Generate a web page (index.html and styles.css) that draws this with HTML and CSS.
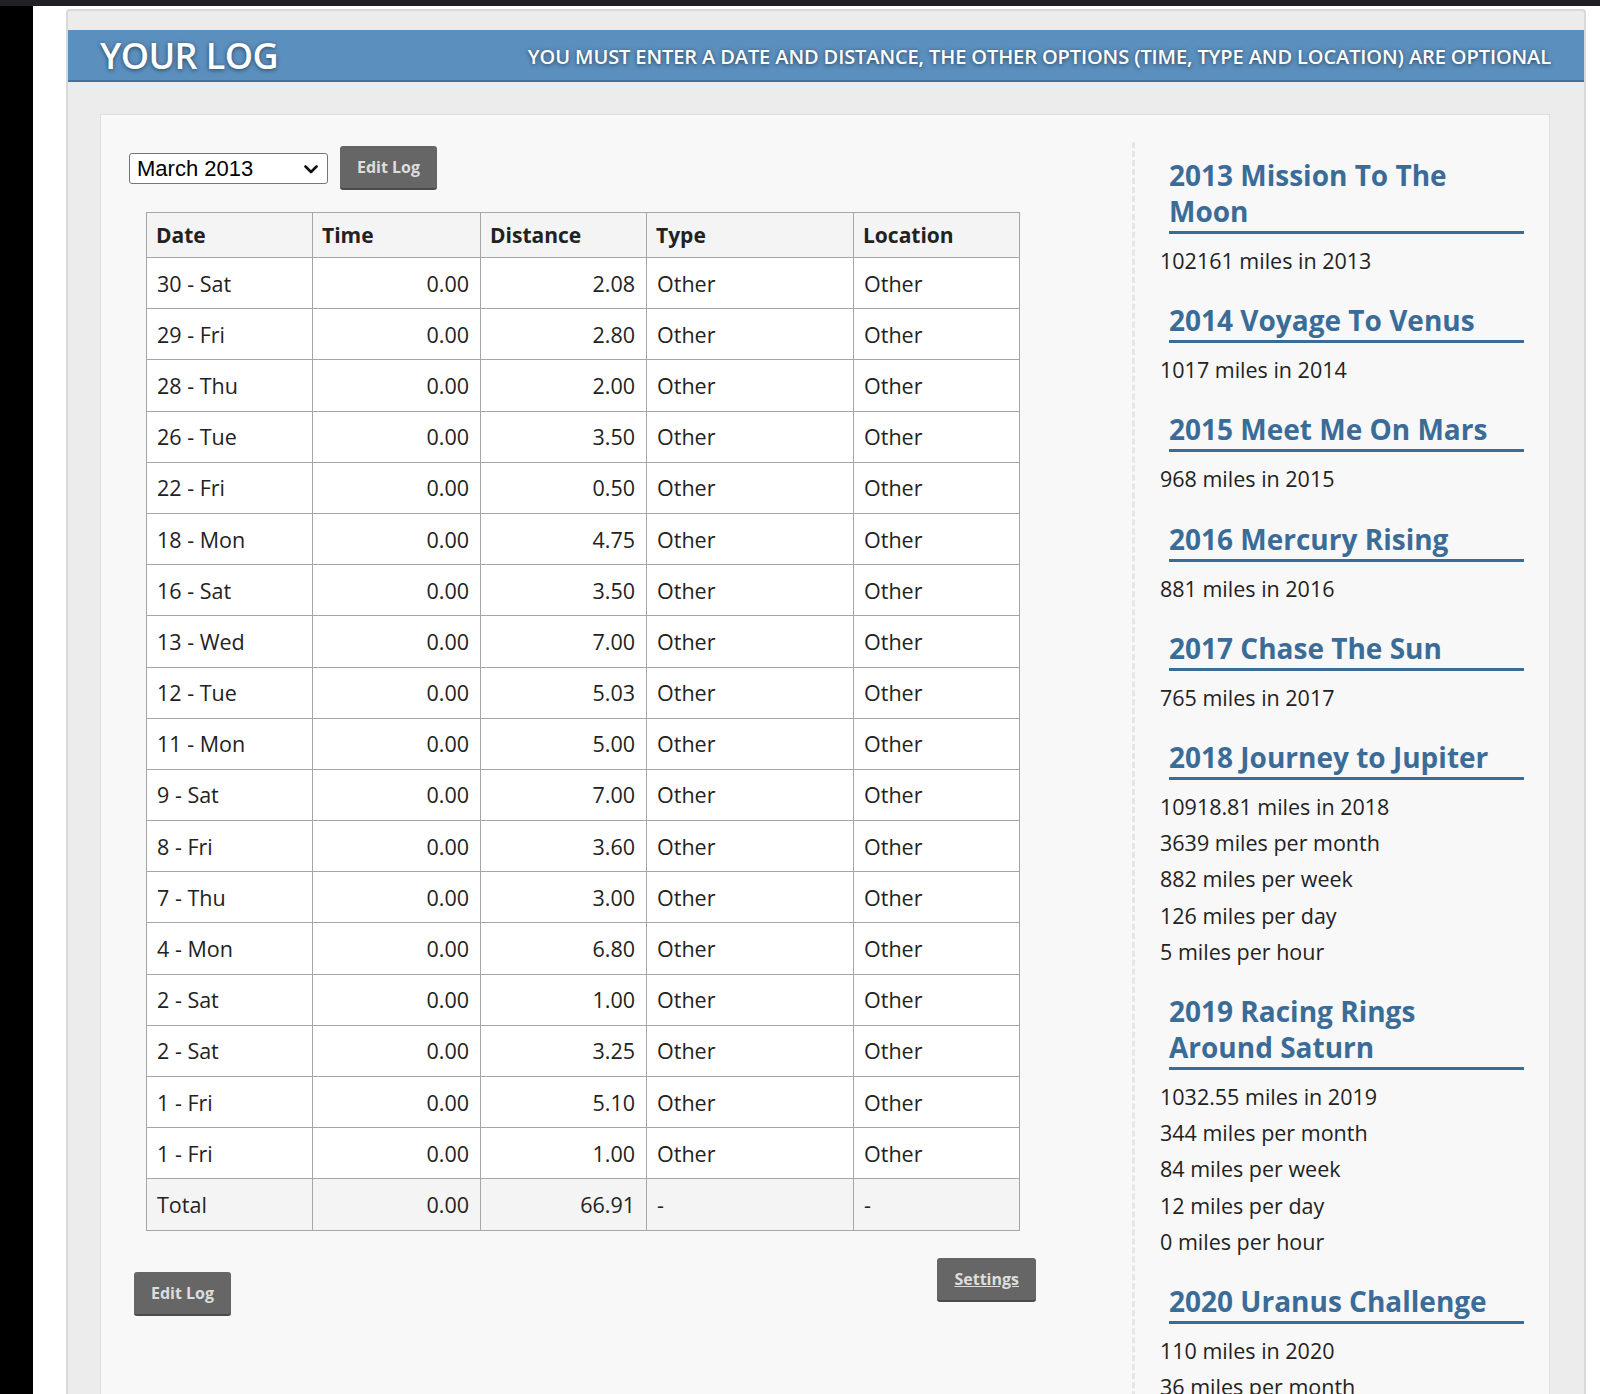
FILE: index.html
```html
<!DOCTYPE html>
<html lang="en">
<head>
    <meta charset="UTF-8">
    <meta name="viewport" content="width=device-width, initial-scale=1.0">
    <title>Your Log</title>
    <link rel="stylesheet" href="styles.css">
</head>
<body>
    <div class="top-bar"></div>
    <div class="frame">
        <div class="dark-edge"></div>
        <div class="page">
            <div class="panel">
                <header class="log-header">
                    <h1>YOUR LOG</h1>
                    <div class="notice">YOU MUST ENTER A DATE AND DISTANCE, THE OTHER OPTIONS (TIME, TYPE AND LOCATION) ARE OPTIONAL</div>
                </header>

                <div class="content">
                    <!-- Log table column -->
                    <div class="main-col">
                        <div class="controls">
                            <div class="select-wrap">
                                <select class="month-select">
                                    <option>March 2013</option>
                                    <option>February 2013</option>
                                    <option>January 2013</option>
                                </select>
                                <svg class="chevron" width="14" height="9" viewBox="0 0 14 9"><path d="M1.5 1.5 L7 7 L12.5 1.5" fill="none" stroke="#111" stroke-width="2.6" stroke-linecap="round" stroke-linejoin="round"/></svg>
                            </div>
                            <button type="button" class="btn">Edit Log</button>
                        </div>

                        <table class="log-table">
                            <colgroup>
                                <col style="width: 166px">
                                <col style="width: 168px">
                                <col style="width: 166px">
                                <col style="width: 207px">
                                <col style="width: 166px">
                            </colgroup>
                            <thead>
                                <tr><th>Date</th><th>Time</th><th>Distance</th><th>Type</th><th>Location</th></tr>
                            </thead>
                            <tbody>
                                <tr><td>30 - Sat</td><td class="num">0.00</td><td class="num">2.08</td><td>Other</td><td>Other</td></tr>
                                <tr><td>29 - Fri</td><td class="num">0.00</td><td class="num">2.80</td><td>Other</td><td>Other</td></tr>
                                <tr><td>28 - Thu</td><td class="num">0.00</td><td class="num">2.00</td><td>Other</td><td>Other</td></tr>
                                <tr><td>26 - Tue</td><td class="num">0.00</td><td class="num">3.50</td><td>Other</td><td>Other</td></tr>
                                <tr><td>22 - Fri</td><td class="num">0.00</td><td class="num">0.50</td><td>Other</td><td>Other</td></tr>
                                <tr><td>18 - Mon</td><td class="num">0.00</td><td class="num">4.75</td><td>Other</td><td>Other</td></tr>
                                <tr><td>16 - Sat</td><td class="num">0.00</td><td class="num">3.50</td><td>Other</td><td>Other</td></tr>
                                <tr><td>13 - Wed</td><td class="num">0.00</td><td class="num">7.00</td><td>Other</td><td>Other</td></tr>
                                <tr><td>12 - Tue</td><td class="num">0.00</td><td class="num">5.03</td><td>Other</td><td>Other</td></tr>
                                <tr><td>11 - Mon</td><td class="num">0.00</td><td class="num">5.00</td><td>Other</td><td>Other</td></tr>
                                <tr><td>9 - Sat</td><td class="num">0.00</td><td class="num">7.00</td><td>Other</td><td>Other</td></tr>
                                <tr><td>8 - Fri</td><td class="num">0.00</td><td class="num">3.60</td><td>Other</td><td>Other</td></tr>
                                <tr><td>7 - Thu</td><td class="num">0.00</td><td class="num">3.00</td><td>Other</td><td>Other</td></tr>
                                <tr><td>4 - Mon</td><td class="num">0.00</td><td class="num">6.80</td><td>Other</td><td>Other</td></tr>
                                <tr><td>2 - Sat</td><td class="num">0.00</td><td class="num">1.00</td><td>Other</td><td>Other</td></tr>
                                <tr><td>2 - Sat</td><td class="num">0.00</td><td class="num">3.25</td><td>Other</td><td>Other</td></tr>
                                <tr><td>1 - Fri</td><td class="num">0.00</td><td class="num">5.10</td><td>Other</td><td>Other</td></tr>
                                <tr><td>1 - Fri</td><td class="num">0.00</td><td class="num">1.00</td><td>Other</td><td>Other</td></tr>
                                <tr class="total-row"><td>Total</td><td class="num">0.00</td><td class="num">66.91</td><td>-</td><td>-</td></tr>
                            </tbody>
                        </table>

                        <div class="bottom-actions">
                            <button type="button" class="btn edit-bottom">Edit Log</button>
                            <a href="#" class="btn settings-btn">Settings</a>
                        </div>
                    </div>

                    <!-- Challenges sidebar -->
                    <aside class="sidebar">
                        <h3>2013 Mission To The Moon</h3>
                        <div class="stats">
                            <p>102161 miles in 2013</p>
                        </div>

                        <h3>2014 Voyage To Venus</h3>
                        <div class="stats">
                            <p>1017 miles in 2014</p>
                        </div>

                        <h3>2015 Meet Me On Mars</h3>
                        <div class="stats">
                            <p>968 miles in 2015</p>
                        </div>

                        <h3>2016 Mercury Rising</h3>
                        <div class="stats">
                            <p>881 miles in 2016</p>
                        </div>

                        <h3>2017 Chase The Sun</h3>
                        <div class="stats">
                            <p>765 miles in 2017</p>
                        </div>

                        <h3>2018 Journey to Jupiter</h3>
                        <div class="stats">
                            <p>10918.81 miles in 2018</p>
                            <p>3639 miles per month</p>
                            <p>882 miles per week</p>
                            <p>126 miles per day</p>
                            <p>5 miles per hour</p>
                        </div>

                        <h3>2019 Racing Rings Around Saturn</h3>
                        <div class="stats">
                            <p>1032.55 miles in 2019</p>
                            <p>344 miles per month</p>
                            <p>84 miles per week</p>
                            <p>12 miles per day</p>
                            <p>0 miles per hour</p>
                        </div>

                        <h3>2020 Uranus Challenge</h3>
                        <div class="stats">
                            <p>110 miles in 2020</p>
                            <p>36 miles per month</p>
                            <p>9 miles per week</p>
                            <p>1 miles per day</p>
                            <p>0 miles per hour</p>
                        </div>
                    </aside>
                </div>
            </div>
        </div>
    </div>
</body>
</html>
```

FILE: styles.css
```css
body {
    margin: 0;
    padding: 0;
    background-color: #fff;
    font-family: "Open Sans", Arial, sans-serif;
    color: #222;
}

.top-bar {
    height: 6px;
    background-color: #202124;
}

.frame {
    display: flex;
    align-items: stretch;
}

.dark-edge {
    width: 33px;
    flex-shrink: 0;
    background-color: #000;
}

.page {
    flex: 1;
    padding: 3px 14px 0 33px;
}

.panel {
    background-color: #ececec;
    border: 2px solid #d9d9d9;
    border-bottom: none;
    border-radius: 4px 4px 0 0;
    padding-top: 19px;
    padding-bottom: 40px;
}

/* Blue title bar */
.log-header {
    display: flex;
    justify-content: space-between;
    align-items: center;
    height: 50px;
    padding: 0 33px 0 32px;
    background-color: #5b8fbe;
    border-bottom: 2px solid #43719c;
    color: #fff;
    text-shadow: 0 1px 4px rgba(0, 0, 0, 0.55);
}

.log-header h1 {
    margin: 0;
    font-size: 36px;
    font-weight: 600;
    letter-spacing: -0.6px;
}

.notice {
    font-size: 20px;
    font-weight: 600;
    letter-spacing: -0.1px;
    padding-top: 3px;
}

.content {
    display: flex;
    align-items: flex-start;
    margin: 32px 34px 0 32px;
    padding: 31px 0 60px 28px;
    background-color: #f8f8f8;
    border: 1px solid #dedede;
}

.main-col {
    width: 907px;
    flex-shrink: 0;
}

.controls {
    display: flex;
    align-items: center;
    gap: 12px;
}

.select-wrap {
    position: relative;
}

.month-select {
    appearance: none;
    -webkit-appearance: none;
    width: 199px;
    height: 31px;
    padding: 0 0 0 7px;
    font-family: "Liberation Sans", Arial, sans-serif;
    font-size: 22px;
    color: #000;
    background-color: #fff;
    border: 1px solid #767676;
    border-radius: 3px;
}

.chevron {
    position: absolute;
    right: 10px;
    top: 12px;
    pointer-events: none;
}

.btn {
    display: inline-block;
    box-sizing: border-box;
    height: 44px;
    padding: 0 17px;
    background-color: #666;
    color: #ddd;
    border: none;
    border-bottom: 2px solid #4a4a4a;
    border-radius: 3px;
    font-family: "Open Sans", Arial, sans-serif;
    font-size: 16px;
    font-weight: 700;
    line-height: 43px;
    cursor: pointer;
}

.btn:hover {
    background-color: #555;
}

/* Log table */
.log-table {
    margin: 22px 0 0 17px;
    width: 873px;
    table-layout: fixed;
    border-collapse: collapse;
    font-size: 21.5px;
    background-color: #fff;
}

.log-table th,
.log-table td {
    border: 1px solid #a6a6a6;
    padding: 0 10px;
    text-align: left;
    vertical-align: middle;
}

.log-table th {
    height: 44px;
    padding-left: 9px;
    font-size: 21px;
    font-weight: 700;
    background-color: #f4f4f4;
}

.log-table td {
    height: 50.2px;
}

.log-table td.num {
    text-align: right;
    padding-right: 11px;
}

.log-table .total-row td {
    background-color: #f4f4f4;
}

.bottom-actions {
    display: flex;
    align-items: flex-start;
    margin-top: 27px;
}

.edit-bottom {
    margin: 14px 0 0 5px;
}

.settings-btn {
    margin-left: auto;
    padding: 0 17px;
    text-decoration: underline;
}

/* Challenges sidebar */
.sidebar {
    flex: 1;
    margin: -4px 0 0 96px;
    padding: 0 25px 0 25px;
    border-left: 3px dashed #e6e6e6;
}

.sidebar h3 {
    margin: 23px 0 0 9px;
    padding-bottom: 2px;
    font-size: 28px;
    line-height: 36px;
    font-weight: 700;
    color: #3b6c98;
    border-bottom: 3px solid #3b6c98;
}

.sidebar h3:first-child {
    margin-top: 15px;
}

.stats {
    margin-top: 9px;
}

.stats p {
    margin: 0;
    font-size: 21.5px;
    line-height: 36.2px;
}
```
